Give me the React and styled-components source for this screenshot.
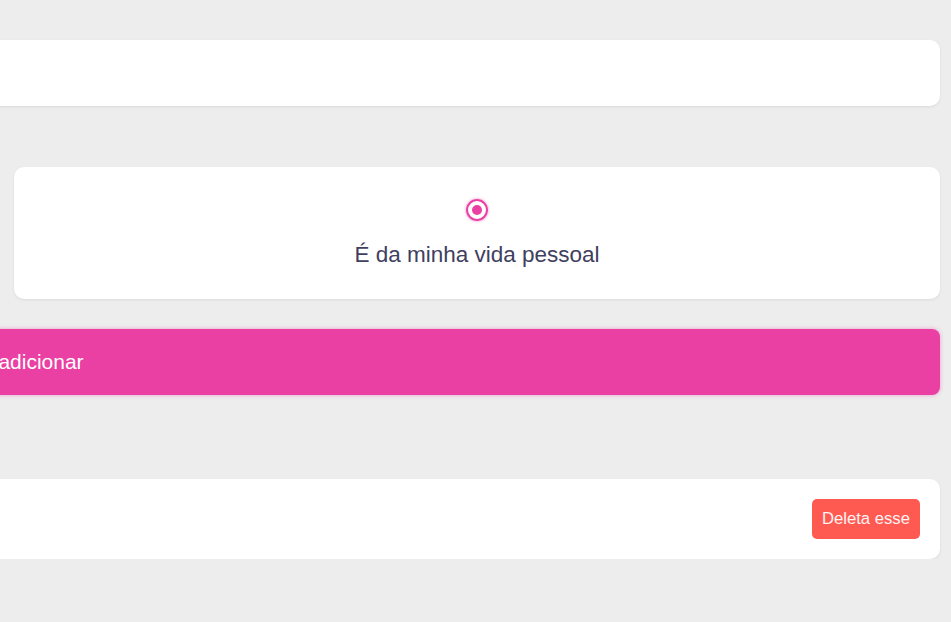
import React, { useState } from 'react';
import styled, { createGlobalStyle } from 'styled-components';

const GlobalStyle = createGlobalStyle`
  html, body {
    margin: 0;
    padding: 0;
    background: #ededed;
    overflow: hidden;
    font-family: "Liberation Sans", Arial, sans-serif;
  }
`;

const Page = styled.div`
  width: 1810px;
  margin-left: -870px;
  padding-top: 40px;
  display: flex;
  flex-direction: column;
`;

const Card = styled.div`
  background: #ffffff;
  border-radius: 10px;
  box-shadow: 0 1px 3px rgba(0, 0, 0, 0.08);
`;

const TitleField = styled(Card).attrs({ as: 'input' })`
  height: 66px;
  border: 0;
  box-sizing: border-box;
  padding: 0 20px;
  font: inherit;
  font-size: 20px;
  color: #3d3f5a;
  outline: none;
`;

const Choices = styled.div`
  display: grid;
  grid-template-columns: 1fr 926px;
  gap: 28px;
  margin-top: 61px;
`;

const Choice = styled(Card)`
  display: flex;
  flex-direction: column;
  align-items: center;
  padding: 32px 0 31px;
  cursor: pointer;
`;

const Radio = styled.span`
  width: 22px;
  height: 22px;
  box-sizing: border-box;
  border-radius: 50%;
  border: 2px solid ${(p) => (p.$checked ? '#ea40a4' : '#b9b9c6')};
  display: flex;
  align-items: center;
  justify-content: center;
  box-shadow: ${(p) => (p.$checked ? '0 0 3px rgba(234, 64, 164, 0.6)' : 'none')};

  &::after {
    content: '';
    width: 10px;
    height: 10px;
    border-radius: 50%;
    background: ${(p) => (p.$checked ? '#ea40a4' : 'transparent')};
  }
`;

const ChoiceLabel = styled.span`
  margin-top: 21px;
  font-size: 22.5px;
  line-height: 26px;
  color: #3f4060;
`;

const AddButton = styled.button`
  margin-top: 30px;
  height: 66px;
  border: 0;
  border-radius: 8px;
  background: #ea40a4;
  box-shadow: 0 0 4px rgba(234, 64, 164, 0.45);
  color: #ffffff;
  font-family: inherit;
  font-size: 21px;
  padding: 0 0 0 12px;
  cursor: pointer;
`;

const Item = styled(Card)`
  margin-top: 84px;
  height: 80px;
  box-sizing: border-box;
  padding: 0 20px;
  display: flex;
  align-items: center;
  justify-content: space-between;
  font-size: 20px;
  color: #3d3f5a;
`;

const DeleteButton = styled.button`
  height: 40px;
  padding: 0 10px;
  border: 0;
  border-radius: 5px;
  background: #ff5a52;
  color: #fff3f3;
  font-family: inherit;
  font-size: 16.7px;
  cursor: pointer;
`;

export default function App() {
  const [kind, setKind] = useState('pessoal');

  return (
    <>
      <GlobalStyle />
      <Page>
        <TitleField type="text" />
        <Choices>
          <Choice onClick={() => setKind('trabalho')}>
            <Radio $checked={kind === 'trabalho'} />
            <ChoiceLabel>É do trabalho</ChoiceLabel>
          </Choice>
          <Choice onClick={() => setKind('pessoal')}>
            <Radio $checked={kind === 'pessoal'} />
            <ChoiceLabel>É da minha vida pessoal</ChoiceLabel>
          </Choice>
        </Choices>
        <AddButton>adicionar</AddButton>
        <Item>
          <span></span>
          <DeleteButton>Deleta esse</DeleteButton>
        </Item>
      </Page>
    </>
  );
}
